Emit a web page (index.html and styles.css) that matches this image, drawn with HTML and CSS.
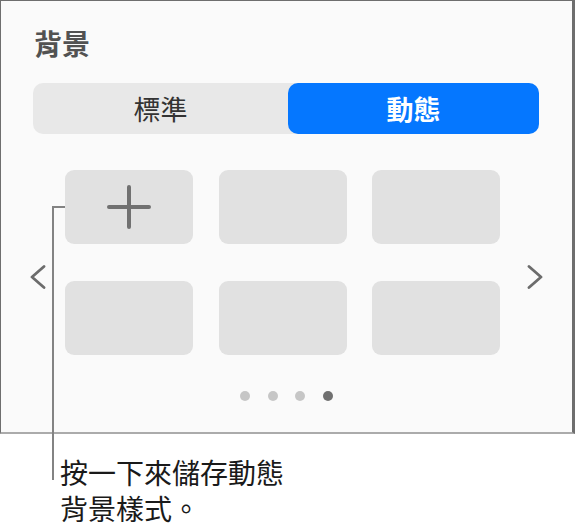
FILE: index.html
```html
<!DOCTYPE html>
<html lang="zh-Hant">
<head>
<meta charset="utf-8">
<link rel="stylesheet" href="styles.css">
</head>
<body>
<div class="page">
  <section class="panel">
    <h2 class="title">背景</h2>
    <div class="segmented">
      <div class="seg">標準</div>
      <div class="seg active">動態</div>
    </div>
    <div class="carousel">
      <svg class="chev" width="16" height="24" viewBox="0 0 16 24"><path d="M14 1.5 L2 12 L14 22.5" fill="none" stroke="#6c6c6c" stroke-width="2.8" stroke-linecap="round" stroke-linejoin="round"/></svg>
      <div class="grid">
        <div class="tile"><svg width="44" height="44" viewBox="0 0 44 44"><path d="M22 2 V42 M2 22 H42" stroke="#717171" stroke-width="4" stroke-linecap="round"/></svg></div>
        <div class="tile"></div>
        <div class="tile"></div>
        <div class="tile"></div>
        <div class="tile"></div>
        <div class="tile"></div>
      </div>
      <svg class="chev" width="16" height="24" viewBox="0 0 16 24"><path d="M2 1.5 L14 12 L2 22.5" fill="none" stroke="#6c6c6c" stroke-width="2.8" stroke-linecap="round" stroke-linejoin="round"/></svg>
    </div>
    <div class="dots">
      <span class="dot"></span><span class="dot"></span><span class="dot"></span><span class="dot on"></span>
    </div>
  </section>
  <p class="callout">按一下來儲存動態<br>背景樣式。</p>
  <div class="leader"></div>
</div>
</body>
</html>
```
FILE: styles.css
```css
html, body {
  margin: 0;
  padding: 0;
  background: #ffffff;
}
.page {
  position: relative;
  width: 575px;
  height: 529px;
  font-family: "Noto Sans CJK TC", "Noto Sans", sans-serif;
}
.panel {
  box-sizing: border-box;
  width: 575px;
  height: 434px;
  background: #fafafa;
  border-top: 1px solid #6e6e6e;
  border-left: 1px solid #6e6e6e;
  border-right: 3px solid #6e6e6e;
  border-bottom: 2px solid #ababab;
  padding-top: 28px;
}
.title {
  margin: 0 0 0 33px;
  font-size: 28px;
  line-height: 29px;
  font-weight: 700;
  color: #525252;
}
.segmented {
  margin: 25px 0 0 32px;
  width: 506px;
  height: 51px;
  display: grid;
  grid-template-columns: 255px 1fr;
  background: #e8e8e8;
  border-radius: 10px;
}
.seg {
  display: flex;
  align-items: center;
  justify-content: center;
  font-size: 27px;
  color: #333333;
}
.seg.active {
  background: #0577ff;
  color: #ffffff;
  border-radius: 10px;
  font-weight: 700;
}
.carousel {
  display: flex;
  align-items: flex-start;
  margin-top: 36px;
  padding-left: 29px;
}
.chev {
  flex: none;
  margin-top: 95px;
}
.grid {
  margin: 0 27px 0 19px;
  display: grid;
  grid-template-columns: repeat(3, 128px);
  grid-auto-rows: 74px;
  column-gap: 25.5px;
  row-gap: 37px;
}
.tile {
  background: #e1e1e1;
  border-radius: 9px;
  display: flex;
  align-items: center;
  justify-content: center;
}
.dots {
  display: flex;
  justify-content: center;
  gap: 17.5px;
  margin-top: 36px;
}
.dot {
  width: 10px;
  height: 10px;
  border-radius: 50%;
  background: #c6c6c6;
}
.dot.on {
  background: #707070;
}
.callout {
  margin: 20px 0 0 60px;
  font-size: 28px;
  line-height: 36px;
  color: #1a1a1a;
}
.leader {
  position: absolute;
  left: 52px;
  top: 206px;
  width: 11px;
  height: 272px;
  border-top: 2px solid #838383;
  border-left: 2px solid #838383;
}
```
